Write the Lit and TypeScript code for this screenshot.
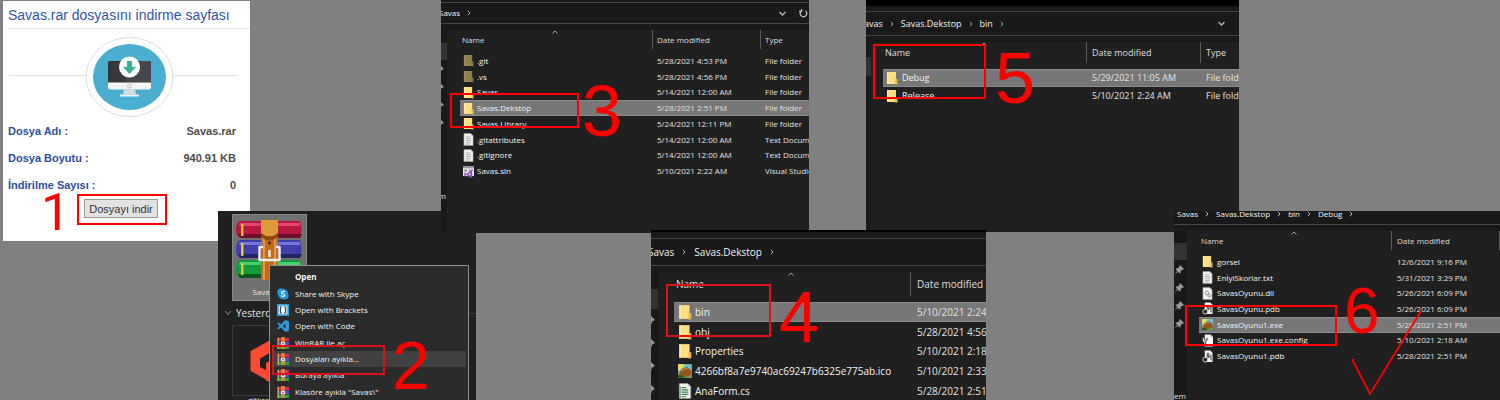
import { LitElement, html, svg, css, nothing } from "lit";
import { customElement, property } from "lit/decorators.js";
import { classMap } from "lit/directives/class-map.js";

type IconName = "folder" | "hidden" | "text" | "sln" | "image" | "code" | "dll" | "pdb" | "config";

interface FileRow {
  icon: IconName;
  name: string;
  date: string;
  type?: string;
  selected?: boolean;
}

const page = svg`<path d="M1 .5h7.500L11 3v10.500H1z" fill="#f4f4f4" stroke="#9a9a9a" stroke-width=".6"/><path d="M8.500.5V3H11" fill="#c8c8c8"/>`;

const fileIcons: Record<IconName, unknown> = {
  folder: svg`<path d="M1 1h9v12H1z" fill="#fbdf80"/><path d="M1 1h1.500v12H1z" fill="#ffeaa6"/><path d="M9 8h2.500v5.500H9z" fill="#e6bd4c"/>`,
  hidden: svg`<path d="M1 1h9v12H1z" fill="#8f8250"/><path d="M1 1h1.500v12H1z" fill="#9b8e5c"/><path d="M9 8h2.500v5.500H9z" fill="#7c6d35"/>`,
  text: svg`${page}<path d="M3 4h5M3 6h6M3 8h6M3 10h6M3 12h4" stroke="#9b9b9b" stroke-width=".8"/>`,
  sln: svg`<path d="M0 1h12v11H0z" fill="#e9e9ee"/><path d="M0 1h12v2.500H0z" fill="#9a93a8"/><path d="M1.500 5h3v2h-3zM7 5h4v1.500H7z" fill="#78758a"/><path d="M1 9l1-1 2 1.600L8 6l2 1v6l-2 1-4-3.500L2 12l-1-1 1-1z" fill="#8b4fc4"/><path d="M8 8.500v3L6 10z" fill="#fff"/>`,
  image: svg`<path d="M0 1h12v12H0z" fill="#6cc6d2"/><path d="M0 1h6L3 5 0 7z" fill="#f2dc5a"/><path d="M0 9l4-1 8 2v3H0z" fill="#6f9b3c"/><path d="M1.500 7.500L4 4.500l4-1 3.500 3v4l-5 1.500-5-1z" fill="#94581f"/><path d="M3 7l2.500-2L9 5" stroke="#c98743" fill="none"/><path d="M0 10.500l4 .5 2 2H0z" fill="#24592a"/>`,
  code: svg`${page}<path d="M3 4h4M3 6h6M3 8h6M3 10h6M3 12h4" stroke="#3f7a4c"/><path d="M2 3v10" stroke="#6ba578" stroke-width=".8"/>`,
  dll: svg`${page}<circle cx="5.500" cy="6.500" r="2" fill="none" stroke="#7d8da0"/><circle cx="8" cy="9.500" r="1.500" fill="none" stroke="#7d8da0"/>`,
  pdb: svg`<path d="M3 .5h6L11.500 3v10H3z" fill="#f2f2f2"/><path d="M5 3h3v5H5zM9 5h1.500v6H9z" fill="#777"/><circle cx="3.500" cy="10.500" r="2.600" fill="#222" stroke="#ddd"/><path d="M6 9l3-3" stroke="#333"/>`,
  config: svg`<path d="M3 .5h6.500L12 3v10.500H3z" fill="#f4f4f4"/><path d="M9.500.5V3H12" fill="#999"/><path d="M2 4v3l2 1 2-1V4M4 8v5" stroke="#eee" stroke-width="2.400" fill="none"/><path d="M2.500 4v2.500L4 7.500l1.500-1V4M4 8v5" stroke="#333" fill="none"/>`,
};

const books = svg`
  <path d="M4 1h60q3 8 0 17H4Q0 16 0 9.500T4 1z" fill="#b5173f"/><path d="M4 3h60v3H3z" fill="#e0486c"/><path d="M2 14h64l-2 4H4z" fill="#6f0d28"/>
  <path d="M4 20h60q3 8 0 18H4Q0 36 0 29t4-9z" fill="#3f3fa8"/><path d="M4 22h60v3H3z" fill="#7676dc"/><path d="M2 34h64l-2 4H4z" fill="#23235f"/>
  <path d="M4 40h60q3 8 0 18H4Q0 56 0 49t4-9z" fill="#129a3c"/><path d="M4 42h60v3H3z" fill="#45cf6a"/><path d="M2 54h64l-2 4H4z" fill="#09551f"/>
  <path d="M5 4h2.500v12H5zM5 23h2.500v13H5zM5 43h2.500v12H5z" fill="#e8c12c"/>
  <path d="M25 0h17v60H25z" fill="#c26a1d"/><path d="M27 0h2v60h-2zM38 0h2v60h-2z" fill="#e79a45"/>
  <path d="M25 0h17v13q-8.500 7-17 0z" fill="#dd9a3a"/><path d="M25 13q8.500 7 17 0v4q-8.500 7-17 0z" fill="#8b4710"/><circle cx="33.500" cy="23" r="1.500" fill="#4a2408"/>
  <path d="M27 27h-3.500v13h20V27H40M33.500 30v7" fill="none" stroke="#f0f0f0" stroke-width="2.500" stroke-linejoin="round"/>`;

const rarSmall = svg`<path d="M0 1h14v4H0z" fill="#d62b58"/><path d="M0 5.500h14v4H0z" fill="#4c50c8"/><path d="M0 10h14v4H0z" fill="#1fa544"/><path d="M1.500 1v13" stroke="#e8cf55"/><path d="M5 0h4v14H5z" fill="#d8883a"/><path d="M4.500 6h5v3.500h-5z" fill="#f2e7da"/><path d="M6 7h2v1.500H6z" fill="#a3541c"/>`;

@customElement("explorer-window")
export class ExplorerWindow extends LitElement {
  @property({ attribute: false }) crumbs: string[] = [];
  @property({ attribute: false }) columns: string[] = [];
  @property({ attribute: false }) rows: FileRow[] = [];
  @property({ type: Boolean }) tools = false;
  @property({ type: Boolean }) refresh = false;
  @property({ type: Number }) pins = 0;
  @property() footer = "";

  static styles = css`
    :host { display: flex; flex-direction: column; overflow: hidden; background: #191919; color: #e4e4e4; font-family: "Open Sans", "Noto Sans", sans-serif; font-size: var(--size, 8px); line-height: 12px; white-space: nowrap; }
    .strip { flex: none; box-sizing: border-box; height: var(--strip, 2px); border-top: var(--black, 0) solid #000; }
    .address { flex: none; box-sizing: border-box; display: flex; align-items: center; height: var(--address, 22px); border: solid #464646; border-width: 1px 0; margin-top: var(--lift, 0); }
    .crumbs { display: flex; align-items: center; gap: var(--gap, 7px); flex: 1; margin-left: var(--shift, 0); }
    .crumb { color: #f4f4f4; text-decoration: none; }
    .chevron { width: 4px; height: 6px; fill: none; stroke: #b5b5b5; }
    .tool { all: unset; display: flex; justify-content: center; width: 22px; margin-right: var(--tool-end, 2px); }
    .tool svg { width: 9px; height: 9px; fill: none; stroke: #b5b5b5; stroke-width: 1.400; }
    .tool.last { width: 12px; margin: 0; padding-left: 1px; border-left: 1px solid #222; line-height: 20px; }
    .body { flex: 1; display: flex; min-height: 0; padding-top: 6px; }
    .nav { flex: none; display: flex; flex-direction: column; width: var(--nav, 6px); padding-top: var(--nav-top, 13px); overflow: hidden; align-items: flex-end; }
    .current { flex: none; width: 100%; height: var(--current, 17px); background: #333; }
    .pin { flex: none; display: flex; align-items: center; height: var(--pitch, 18px); padding-right: 3px; }
    .pin svg { width: 9px; height: 9px; fill: #939ba0; }
    .foot { margin-top: 58px; padding-right: 1px; }
    .list { flex: 1; min-width: 0; background: #202020; overflow: hidden; }
    table { display: block; margin-left: var(--inset, 12px); }
    thead { display: block; margin-bottom: var(--head-gap, 4px); }
    tr { display: grid; grid-template-columns: var(--cols); align-items: center; min-width: 0; }
    th { position: relative; display: flex; align-items: center; box-sizing: border-box; height: var(--head, 19px); padding-left: 5px; font-weight: 400; color: #dedede; }
    th + th { border-left: 1px solid #5c5c5c; padding-left: calc(var(--cell, 5px) - 1px); }
    th:first-child { padding-left: 2px; }
    .caret { position: absolute; left: 50%; top: 0; margin-left: -4px; width: 6px; height: 4px; fill: none; stroke: #aaa; }
    tbody { display: grid; grid-auto-rows: 1fr; height: var(--rows); }
    td { display: flex; align-items: center; padding: 0 0 0 var(--cell, 5px); color: #e2e2e2; }
    .name { padding-left: var(--icon-left, 3px); gap: var(--icon-gap, 3px); color: #f4f4f4; }
    .name svg { flex: none; width: var(--icon-w, 11px); height: var(--icon-h, 13px); }
    .selected { background: #777; box-shadow: inset 0 1px #8c8c8c, inset 0 -1px #8c8c8c; }
  `;

  render() {
    return html`
      <div class="strip"></div>
      <div class="address">
        <nav class="crumbs">
          ${this.crumbs.map((c) => html`<a class="crumb" href="#">${c}</a><svg class="chevron" viewBox="0 0 4 6"><path d="M.8.8L3 3 .8 5.200" /></svg>`)}
        </nav>
        ${this.tools ? html`<button class="tool" aria-label="History"><svg viewBox="0 0 9 9"><path d="M1.500 3l3 3 3-3" /></svg></button>` : nothing}
        ${this.refresh ? html`<button class="tool last" aria-label="Refresh"><svg viewBox="0 0 9 9"><path d="M6.500 1.800A3.300 3.300 0 1 1 2.500 1.800M2.500 0v2.500H0" /></svg></button>` : nothing}
      </div>
      <div class="body">
        <div class="nav">
          <div class="current"></div>
          ${Array.from({ length: this.pins }, () => html`<div class="pin"><svg viewBox="0 0 9 9"><path d="M5 0l4 4-1 .7-.6-.2L5.700 6.200l-.2 1.800-1 .5L2.900 6.700.3 9 0 8.700l2.300-2.600L.6 4.400l.6-.9 1.700-.2L4.600 1.600 4.300 1z" /></svg></div>`)}
          ${this.footer ? html`<div class="foot">${this.footer}</div>` : nothing}
        </div>
        <div class="list">
          <table>
            <thead>
              <tr>
                ${this.columns.map((c, i) => html`<th>${c}${i === 0 ? html`<svg class="caret" viewBox="0 0 6 4"><path d="M.5 3.500L3 1l2.500 2.500" /></svg>` : nothing}</th>`)}
              </tr>
            </thead>
            <tbody>
              ${this.rows.map((r) => html`
                <tr class=${classMap({ selected: !!r.selected })}>
                  <td class="name"><svg viewBox="0 0 12 14">${fileIcons[r.icon]}</svg>${r.name}</td>
                  <td>${r.date}</td>
                  ${r.type ? html`<td>${r.type}</td>` : nothing}
                </tr>`)}
            </tbody>
          </table>
        </div>
      </div>`;
  }
}

@customElement("download-card")
export class DownloadCard extends LitElement {
  static styles = css`
    :host { display: flex; flex-direction: column; box-sizing: border-box; background: #fff; color: #4c4c4c; font: 11px/16px "Liberation Sans", Arial, sans-serif; padding-left: 5px; }
    h1 { margin: 0; padding: 5px 0 4px; border-bottom: 1px solid #e6e8ee; font-size: 14px; line-height: 18px; font-weight: 400; color: #2f55a4; white-space: nowrap; }
    .art { display: block; margin: 7px 14px 0 1px; }
    dl { margin: 5px 14px 0 0; display: grid; grid-template-columns: auto 1fr; row-gap: 11px; font-weight: 700; }
    dt { color: #2b4f9e; }
    dd { margin: 0; text-align: right; }
    .download { box-sizing: border-box; width: 74px; height: 19px; margin: 6px 0 0 76px; padding: 0; border: 1px solid #9a9a9a; border-radius: 0; background: #e2e2e2; color: #333; font: inherit; white-space: nowrap; }
  `;

  render() {
    return html`
      <h1>Savas.rar dosyasını indirme sayfası</h1>
      <svg class="art" viewBox="0 0 227 82" role="img" aria-label="Download">
        <path d="M0 39.500h77M164 39.500h63" stroke="#dedede" />
        <ellipse cx="120.500" cy="41" rx="43.500" ry="39.500" fill="#fff" stroke="#dcdde2" />
        <ellipse cx="120.500" cy="41" rx="36.500" ry="33" fill="#49aecf" />
        <rect x="99" y="25" width="43" height="28" rx="1.500" fill="#37383d" />
        <path d="M122 25h18.500q1.500 0 1.500 1.500V46h-26z" fill="#45464b" />
        <path d="M99 46.500h43v5q0 2-2 2h-39q-2 0-2-2z" fill="#f5f5f5" />
        <circle cx="120.500" cy="50" r="2" fill="none" stroke="#aaa" stroke-width=".7" />
        <path d="M115 53.500h11l1 5h-13z" fill="#d5dce0" /><path d="M111 58.500h19v2h-19z" fill="#f4f4f4" />
        <circle cx="120.500" cy="31" r="10.500" fill="#fff" />
        <path d="M118 25h5v6h4l-6.500 7-6.500-7h4z" fill="#35b193" />
      </svg>
      <dl>
        <dt>Dosya Adı :</dt><dd>Savas.rar</dd>
        <dt>Dosya Boyutu :</dt><dd>940.91 KB</dd>
        <dt>İndirilme Sayısı :</dt><dd>0</dd>
      </dl>
      <button class="download">Dosyayı indir</button>`;
  }
}

@customElement("context-panel")
export class ContextPanel extends LitElement {
  static styles = css`
    :host { display: block; overflow: hidden; background: #202020; color: #e6e6e6; font: 8px/12px "Open Sans", "Noto Sans", sans-serif; white-space: nowrap; }
    .files { display: flex; flex-direction: column; align-items: flex-start; padding: 3px 0 0 6px; }
    .tile { box-sizing: border-box; width: 75px; height: 87px; margin-left: 8px; padding: 5px 3px 0; background: #717171; border: 1px solid #8a8a8a; text-align: center; }
    .tile svg { display: block; width: 67px; height: 60px; margin-bottom: 6px; }
    .group { display: flex; align-items: center; gap: 4px; width: 100%; padding: 5px 0; font-size: 10px; line-height: 14px; }
    .group svg { width: 8px; height: 6px; fill: none; stroke: #888; }
    .group::after { content: ""; flex: 1; height: 1px; background: #3a3a3a; }
    .tile.plain { height: 71px; background: none; border-color: #3c3c3c; padding: 15px 0 0 16px; }
    .tile.plain svg { width: 40px; height: 40px; }
    .caption { margin-left: 24px; line-height: 8px; }
    .menu { position: absolute; left: 51px; top: 54px; box-sizing: border-box; width: 200px; height: 139px; padding: 3px 2px; border: 1px solid #8f8f8f; background: #2b2b2b; display: grid; grid-auto-rows: 1fr; }
    .item { all: unset; display: flex; align-items: center; gap: 6px; padding-left: 5px; color: #f5f5f5; }
    .item.strong { font-weight: 700; }
    .item.hover { background: #414141; }
    .item svg { width: 12px; height: 12px; }
    .blank { width: 12px; }
  `;

  private items = [
    { label: "Open", icon: nothing },
    { label: "Share with Skype", icon: svg`<circle cx="5" cy="5" r="4.500" fill="#28a8ea"/><circle cx="9" cy="9" r="4.500" fill="#1b86d6"/><circle cx="7" cy="7" r="6" fill="#2196e3"/><path d="M9.200 4.800C8 3.500 5 3.800 5.200 5.400S9 6.800 9 8.600 6 10.300 4.800 9" fill="none" stroke="#fff" stroke-width="1.300"/>` },
    { label: "Open with Brackets", icon: svg`<path d="M0 0h14v14H0z" fill="#2f9fdc"/><path d="M2 2h10v10H2z" fill="#f4fafd"/><path d="M6 3.500H4v7h2M8 3.500h2v7H8" fill="none" stroke="#26526e" stroke-width="1.400"/>` },
    { label: "Open with Code", icon: svg`<path d="M10 0l4 1.700v10.600L10 14 4.500 8.700 1.500 11 0 10.200 3 7 0 3.800 1.500 3l3 2.300zM10 4L6.500 7 10 10z" fill="#2c9be5"/>` },
    { label: "WinRAR ile aç", icon: rarSmall },
    { label: "Dosyaları ayıkla...", icon: rarSmall, hover: true },
    { label: "Buraya ayıkla", icon: rarSmall },
    { label: "Klasöre ayıkla \"Savas\\\"", icon: rarSmall },
  ];

  render() {
    return html`
      <div class="files">
        <div class="tile"><svg viewBox="0 0 67 60">${books}</svg>Savas.rar</div>
        <div class="group"><svg viewBox="0 0 8 6"><path d="M1 1l3 3.500L7 1" /></svg>Yesterday</div>
        <div class="tile plain"><svg viewBox="0 0 40 40"><path d="M20 1.500l17 9.500v18L20 38.500 3 29V11z" fill="#ff4a33" stroke="#ff4a33" stroke-width="3" stroke-linejoin="round" /><path d="M24 10l-13 7.500V26l6 3v-7l7-4z" fill="#202020" /><path d="M17 40v-9l7-3v12z" fill="#ff4a33" /></svg></div>
        <div class="caption">gitkraken</div>
      </div>
      <div class="menu" role="menu">
        ${this.items.map((m, i) => html`
          <button role="menuitem" class=${classMap({ item: true, strong: i === 0, hover: !!m.hover })}>
            ${i === 0 ? html`<span class="blank"></span>` : html`<svg viewBox="0 0 14 14">${m.icon}</svg>`}${m.label}
          </button>`)}
      </div>`;
  }
}

@customElement("app-root")
export class AppRoot extends LitElement {
  static styles = css`
    :host { display: block; position: relative; min-height: 100vh; overflow: hidden; background: #808080; }
    .win { position: absolute; }
    .download { left: 3px; top: 1px; width: 247px; height: 240px; }
    .extract { left: 218px; top: 211px; width: 258px; bottom: 0; }
    .project { left: 441px; top: 0; width: 368px; height: 233px; --cols: 192px 108px 1fr; --inset: 13px; --rows: 126px; --shift: -2px; }
    .output { left: 866px; top: 0; width: 373px; height: 232px; --size: 9px; --cols: 203px 114px 1fr; --strip: 11px; --black: 6px; --address: 25px; --nav: 5px; --nav-top: 15px; --current: 19px; --head: 21px; --head-gap: 6px; --rows: 36px; --shift: -7px; --icon-w: 12px; --icon-h: 14px; --icon-gap: 4px; --cell: 6px; --tool-end: 7px; }
    .desktop { left: 651px; top: 230px; width: 335px; bottom: 0; --size: 10px; --cols: 236px 1fr; --strip: 8px; --black: 2px; --address: 28px; --nav: 7px; --nav-top: 17px; --current: 20px; --pitch: 23px; --inset: 16px; --head: 24px; --head-gap: 6px; --rows: 99px; --shift: -3px; --gap: 8px; --icon-w: 14px; --icon-h: 16px; --icon-left: 4px; --cell: 7px; }
    .debug { left: 1174px; top: 211px; right: 0; bottom: 0; --cols: 192px 108px 1fr; --strip: 0px; --lift: -8px; --nav: 13px; --rows: 110px; --nav-top: 12px; --shift: 3px; --icon-gap: 4px; --cell: 6px; }
    .frame { position: absolute; box-sizing: border-box; border: 2px solid #f00; }
    .frame.soft { border-color: #dc1216; }
    .f1 { left: 77px; top: 194px; width: 90px; height: 31px; }
    .f2 { left: 272px; top: 345px; width: 113px; height: 30px; }
    .f3 { left: 450px; top: 93px; width: 129px; height: 35px; }
    .f4 { left: 666px; top: 284px; width: 105px; height: 53px; }
    .f5 { left: 873px; top: 44px; width: 113px; height: 55px; }
    .f6 { left: 1185px; top: 305px; width: 152px; height: 41px; }
    .step { position: absolute; color: #f00; font: 72px/1 "Liberation Sans", Arial, sans-serif; }
    .s1 { left: 41px; top: 187px; font-family: Roboto, sans-serif; font-size: 52px; }
    .s2 { left: 392px; top: 331px; font-size: 68px; }
    .s3 { left: 582px; top: 75px; }
    .s4 { left: 779px; top: 281px; }
    .s5 { left: 995px; top: 42px; }
    .s6 { left: 1344px; top: 279px; font-size: 64px; }
    .check { position: absolute; left: 1350px; top: 308px; width: 74px; height: 88px; fill: none; stroke: #f00; stroke-width: 1.800; }
  `;

  private project: FileRow[] = [
    { icon: "hidden", name: ".git", date: "5/28/2021 4:53 PM", type: "File folder" },
    { icon: "hidden", name: ".vs", date: "5/28/2021 4:56 PM", type: "File folder" },
    { icon: "folder", name: "Savas", date: "5/14/2021 12:00 AM", type: "File folder" },
    { icon: "folder", name: "Savas.Dekstop", date: "5/28/2021 2:51 PM", type: "File folder", selected: true },
    { icon: "folder", name: "Savas.Library", date: "5/24/2021 12:11 PM", type: "File folder" },
    { icon: "text", name: ".gitattributes", date: "5/14/2021 12:00 AM", type: "Text Document" },
    { icon: "text", name: ".gitignore", date: "5/14/2021 12:00 AM", type: "Text Document" },
    { icon: "sln", name: "Savas.sln", date: "5/10/2021 2:22 AM", type: "Visual Studio Solution" },
  ];

  private desktop: FileRow[] = [
    { icon: "folder", name: "bin", date: "5/10/2021 2:24 AM", selected: true },
    { icon: "folder", name: "obj", date: "5/28/2021 4:56 PM" },
    { icon: "folder", name: "Properties", date: "5/10/2021 2:18 AM" },
    { icon: "image", name: "4266bf8a7e9740ac69247b6325e775ab.ico", date: "5/10/2021 2:33 AM" },
    { icon: "code", name: "AnaForm.cs", date: "5/28/2021 2:51 PM" },
  ];

  private output: FileRow[] = [
    { icon: "folder", name: "Debug", date: "5/29/2021 11:05 AM", type: "File folder", selected: true },
    { icon: "folder", name: "Release", date: "5/10/2021 2:24 AM", type: "File folder" },
  ];

  private debug: FileRow[] = [
    { icon: "folder", name: "gorsel", date: "12/6/2021 9:16 PM" },
    { icon: "text", name: "EnİyiSkorlar.txt", date: "5/31/2021 3:29 PM" },
    { icon: "dll", name: "SavasOyunu.dll", date: "5/26/2021 6:09 PM" },
    { icon: "pdb", name: "SavasOyunu.pdb", date: "5/26/2021 6:09 PM" },
    { icon: "image", name: "SavasOyunu1.exe", date: "5/28/2021 2:51 PM", selected: true },
    { icon: "config", name: "SavasOyunu1.exe.config", date: "5/10/2021 2:18 AM" },
    { icon: "pdb", name: "SavasOyunu1.pdb", date: "5/28/2021 2:51 PM" },
  ];

  render() {
    return html`
      <download-card class="win download"></download-card>
      <context-panel class="win extract"></context-panel>
      <explorer-window class="win project" tools refresh .pins=${4} footer="em" .crumbs=${["Savas"]} .columns=${["Name", "Date modified", "Type"]} .rows=${this.project}></explorer-window>
      <explorer-window class="win output" tools .crumbs=${["Savas", "Savas.Dekstop", "bin"]} .columns=${["Name", "Date modified", "Type"]} .rows=${this.output}></explorer-window>
      <explorer-window class="win desktop" .pins=${4} .crumbs=${["Savas", "Savas.Dekstop"]} .columns=${["Name", "Date modified"]} .rows=${this.desktop}></explorer-window>
      <explorer-window class="win debug" .pins=${4} footer="em" .crumbs=${["Savas", "Savas.Dekstop", "bin", "Debug"]} .columns=${["Name", "Date modified", ""]} .rows=${this.debug}></explorer-window>
      ${[1, 2, 3, 4, 5, 6].map((n) => html`<div class="frame f${n} ${n === 2 || n === 4 ? "soft" : ""}"></div><span class="step s${n}">${n}</span>`)}
      <svg class="check" viewBox="0 0 74 88"><path d="M2 51l18 35L71 3" /></svg>`;
  }
}
